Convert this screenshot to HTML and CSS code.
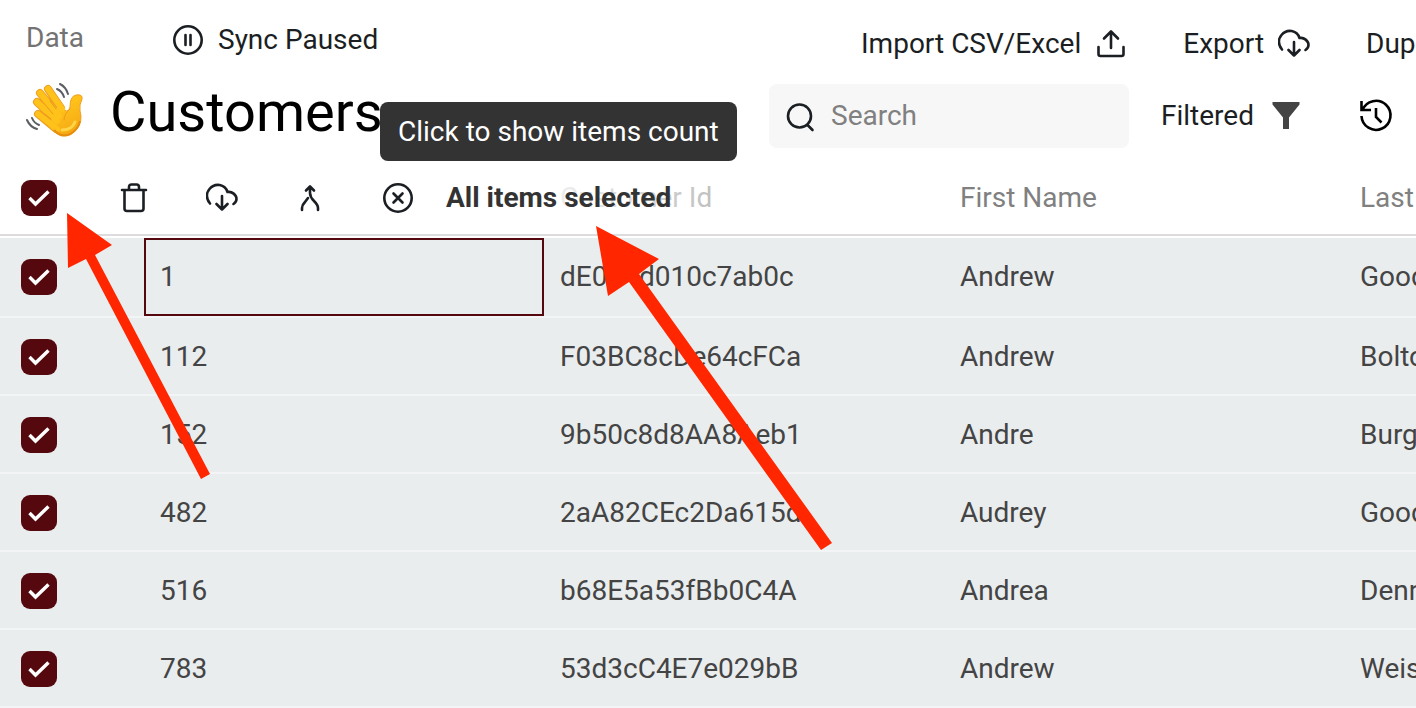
FILE: index.html
```
<!DOCTYPE html>
<html lang="en">
<head>
  <meta charset="utf-8" />
  <meta name="viewport" content="width=device-width, initial-scale=1" />
  <title>Customers</title>
  <link rel="stylesheet" href="styles.css">
</head>
<body>
  <header class="top">
    <div class="top-left">
      <div class="crumbs">
        <a class="crumb" href="#">Data</a>
        <button class="action" type="button">
          <svg class="icon" viewBox="0 0 32 32"><circle cx="16" cy="16" r="13.7"/><path d="M13.5 11v10M18.5 11v10"/></svg>
          Sync Paused
        </button>
      </div>
      <div class="heading">
        <svg class="wave" viewBox="0 2 60 60">
          <defs>
            <linearGradient id="skin" gradientUnits="userSpaceOnUse" x1="20" y1="10" x2="48" y2="58">
              <stop offset="0.4" stop-color="#ffc21a"/>
              <stop offset="1" stop-color="#f3a414"/>
            </linearGradient>
          </defs>
          <g fill="none" stroke="#ee9f22" stroke-width="8" stroke-linecap="round" stroke-linejoin="round">
            <path d="M22 9L35 28M14 13L32 35M11 22L30 40M12 34L30 49"/>
          </g>
          <path d="M32 24L40 31Q43 32 44 27Q44 16 50 15Q57 14 56 19Q53 25 54 31Q57 41 51 49Q45 57 36 56Q31 55 22 46Z" fill="url(#skin)" stroke="#ee9f22"/>
          <g fill="none" stroke="#ffc21a" stroke-width="6" stroke-linecap="round">
            <path d="M22 9L36 29M14 13L33 36M11 22L31 41M12 34L31 49"/>
          </g>
          <path d="M24 21L30 29M21 27L27 34M19 34L25 39M44 29Q38 34 38 40" fill="none" stroke="#ec9a1a" stroke-linecap="round"/>
          <path d="M36 50Q46 50 49 42" fill="none" stroke="#ffd447" stroke-width="3" stroke-linecap="round"/>
          <path d="M28 50Q35 58 44 54Q52 50 54 41" fill="none" stroke="#e58f0c" stroke-width="2"/>
          <g fill="none" stroke="#5b5f61" stroke-width="2" stroke-linecap="round">
            <path d="M31 9Q36 11 38 17M34 4Q40 7 42 14M1 40Q4 47 11 49M6 38Q8 43 13 45"/>
          </g>
        </svg>
        <h1>Customers</h1>
      </div>
    </div>
    <div class="top-right">
      <div class="actions">
        <button class="action" type="button">
          Import CSV/Excel
          <svg class="icon" viewBox="0 0 32 32"><path d="M16 20V4M9 10.500l7-7 7 7M3.500 19v7q0 2 2 2h21q2 0 2-2v-7"/></svg>
        </button>
        <button class="action" type="button">
          Export
          <svg class="icon" viewBox="0 0 32 32"><use href="#cloud"/></svg>
        </button>
        <button class="action" type="button">Duplicates</button>
      </div>
      <div class="tools">
        <label class="search">
          <svg class="icon" viewBox="0 0 32 32"><circle cx="14.500" cy="16" r="11.500"/><path d="M22.500 25l5 5"/></svg>
          <input type="search" placeholder="Search" aria-label="Search">
        </label>
        <button class="action" type="button">
          Filtered
          <svg class="icon funnel" viewBox="0 0 32 32"><path d="M2.500 2h27v2.500L19 17.500V29h-6V17.500L2.500 4.500z"/></svg>
        </button>
        <button class="action history" type="button" aria-label="History">
          <svg class="icon" viewBox="0 0 32 32"><path d="M1.500 1v9H11M2.500 10A14.500 14.500 0 1 1 1.500 16M16 8v9l5.500 5.500"/></svg>
        </button>
      </div>
    </div>
  </header>

  <main class="grid">
    <table>
      <colgroup>
        <col class="col-check"><col class="col-data"><col class="col-data"><col class="col-data"><col>
      </colgroup>
      <thead>
        <tr>
          <th><input type="checkbox" aria-label="Select all" checked></th>
          <th></th>
          <th>Customer Id</th>
          <th>First Name</th>
          <th>Last Name</th>
        </tr>
      </thead>
      <tbody>
        <tr><td><input type="checkbox" aria-label="Select 1" checked></td><td class="active">1</td><td>dE014d010c7ab0c</td><td>Andrew</td><td>Goodman</td></tr>
        <tr><td><input type="checkbox" aria-label="Select 112" checked></td><td>112</td><td>F03BC8cDe64cFCa</td><td>Andrew</td><td>Bolton</td></tr>
        <tr><td><input type="checkbox" aria-label="Select 152" checked></td><td>152</td><td>9b50c8d8AA8Aeb1</td><td>Andre</td><td>Burgess</td></tr>
        <tr><td><input type="checkbox" aria-label="Select 482" checked></td><td>482</td><td>2aA82CEc2Da615d</td><td>Audrey</td><td>Goodwin</td></tr>
        <tr><td><input type="checkbox" aria-label="Select 516" checked></td><td>516</td><td>b68E5a53fBb0C4A</td><td>Andrea</td><td>Dennis</td></tr>
        <tr><td><input type="checkbox" aria-label="Select 783" checked></td><td>783</td><td>53d3cC4E7e029bB</td><td>Andrew</td><td>Weiss</td></tr>
      </tbody>
    </table>

    <!-- bulk actions, over the header row -->
    <div class="bulk">
      <button type="button" aria-label="Delete">
        <svg class="icon" viewBox="0 0 32 32"><path d="M4 8h24M6.500 8v18.500q0 2.500 2.500 2.500h14q2.500 0 2.500-2.500V8M11 7V5q0-2.500 2.500-2.500h5Q21 2.500 21 5v2"/></svg>
      </button>
      <button type="button" aria-label="Export">
        <svg class="icon" viewBox="0 0 32 32">
          <path id="cloud" d="M4 21.500C0 17 0 11 3.500 7C9 .5 19 2 21.500 10C26 9 30.500 13 30.500 17q0 3-3 5M16 14v13.500M10.500 22l5.500 5.500 5.500-5.500"/>
        </svg>
      </button>
      <button type="button" aria-label="Merge">
        <svg class="icon" viewBox="0 0 32 32"><path d="M12 8.500l4-4 4 4M16 5v6q0 4 4 8q4 4 4 7v2M8 28v-2q0-3 3-6l3-4"/></svg>
      </button>
      <button type="button" aria-label="Clear selection">
        <svg class="icon" viewBox="0 0 32 32"><circle cx="16" cy="16" r="13.700"/><path d="M11.500 11.500l9 9M20.500 11.500l-9 9"/></svg>
      </button>
      <button class="count" type="button">All items selected</button>
    </div>
  </main>

  <div class="tooltip" role="tooltip">Click to show items count</div>

  <svg class="arrows" width="840" height="560" viewBox="0 0 840 560">
    <path d="M67 213L112 245L95 255L210 474L201 479L86 259L68 268Z"/>
    <path d="M596 226L659 259L639 274L832 543L821 550L629 282L608 296Z"/>
  </svg>
</body>
</html>
```
FILE: styles.css
```
* { box-sizing: border-box; }
body {
  margin: 0;
  position: relative;
  font-family: Roboto, "Liberation Sans", sans-serif;
  font-size: 28px;
  line-height: 32px;
  color: #1b1f23;
  background: #fff;
  overflow: hidden;
}
button {
  font: inherit; color: inherit;
  background: none; border: none; padding: 0;
  cursor: pointer;
}
.icon {
  flex: none; display: block;
  width: 32px; height: 32px;
  fill: none; stroke: #1b1f23; stroke-width: 2.6;
  stroke-linecap: round; stroke-linejoin: round;
}

/* top bar */
.top { display: flex; height: 160px; }
.top-left { flex: 1; padding-left: 26px; }
.crumbs { display: flex; align-items: center; gap: 88px; height: 80px; }
.crumb { color: #737373; text-decoration: none; padding-bottom: 4px; }
.action { display: flex; align-items: center; gap: 14px; white-space: nowrap; }
.heading { display: flex; align-items: center; gap: 24px; height: 64px; }
.wave { width: 60px; height: 60px; }
h1 { margin: 0; font-size: 56px; font-weight: 400; line-height: 60px; color: #000; }

.top-right { flex: 0 0 647px; overflow: hidden; }
.actions { display: flex; align-items: center; gap: 56px; height: 84px; padding: 4px 0 0 92px; }
.tools { display: flex; align-items: center; gap: 32px; }
.tools .action { gap: 16px; }
.search {
  display: flex; align-items: center; gap: 14px;
  flex: none; width: 360px; height: 64px; padding: 0 16px;
  background: #f7f7f7; border-radius: 8px;
}
.search input {
  flex: 1; min-width: 0; padding: 0;
  border: none; outline: none; background: none;
  font: inherit;
}
.search input::placeholder { color: #808080; opacity: 1; }
.funnel { fill: #444; stroke: none; }
.history { margin-left: 26px; }
.history .icon { overflow: visible; stroke: #000; stroke-linecap: butt; stroke-linejoin: miter; }

/* table */
.grid { position: relative; }
table { width: 100%; table-layout: fixed; border-collapse: separate; border-spacing: 0; }
.col-check { width: 144px; }
.col-data { width: 400px; }
th, td {
  height: 78px; padding: 2px 0 0 16px;
  text-align: left; font-weight: 400;
  white-space: nowrap; overflow: hidden;
}
th { height: 76px; color: #808080; border-bottom: 2px solid #dcdcde; }
td { color: #444; background: #eaedee; border-bottom: 2px solid #f3f4f5; }
tbody tr:first-child td { height: 82px; padding-top: 0; border-top: 2px solid #fff; }
th:first-child, td:first-child { padding-left: 21px; }
td.active { position: relative; }
td.active::after {
  content: ""; position: absolute; inset: 0;
  border: 2px solid #55090f;
}
input[type="checkbox"] {
  appearance: none; display: block;
  width: 36px; height: 36px; margin: 0;
  border-radius: 9px;
  background: #55090f url("data:image/svg+xml,%3Csvg xmlns='http://www.w3.org/2000/svg' viewBox='0 0 36 36'%3E%3Cpath d='M8.500 18l6 6L27.500 11.500' fill='none' stroke='%23fff' stroke-width='3.400'/%3E%3C/svg%3E");
}

.bulk {
  position: absolute; top: 0; left: 118px;
  display: flex; align-items: center; gap: 56px;
  width: 640px; height: 74px; padding-top: 2px;
  background: linear-gradient(to right, #fff 60%, rgba(255, 255, 255, 0.4));
}
.bulk .count { margin-left: -24px; font-weight: 700; color: #333; white-space: nowrap; }

.tooltip {
  position: absolute; top: 102px; left: 380px;
  padding: 14px 18px 13px;
  color: #fff; background: #333; border-radius: 8px;
  white-space: nowrap;
}
.arrows { position: absolute; top: 0; left: 0; pointer-events: none; }
.arrows path { fill: #ff2600; }
```
